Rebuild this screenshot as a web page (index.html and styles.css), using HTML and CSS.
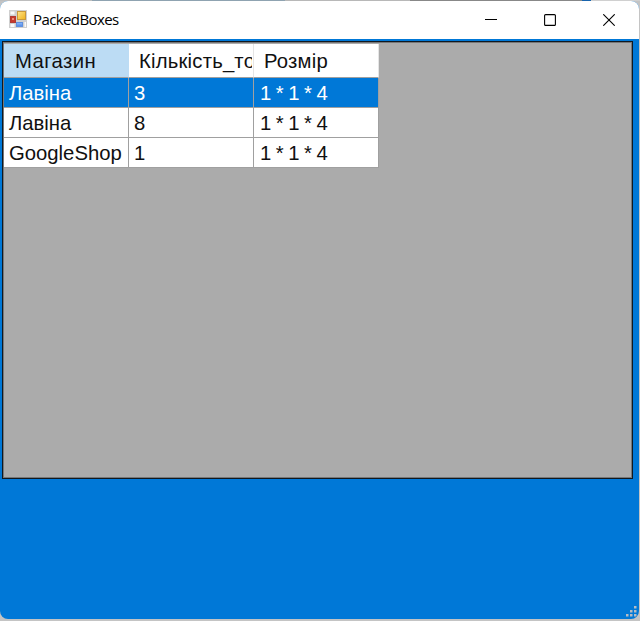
FILE: index.html
```html
<!DOCTYPE html>
<html lang="uk">
<head>
<meta charset="utf-8">
<title>PackedBoxes</title>
<link rel="stylesheet" href="styles.css">
</head>
<body>
<div class="window">
  <header class="titlebar">
    <svg class="app-icon" width="18" height="18" viewBox="0 0 18 18">
      <defs>
        <linearGradient id="gold" x2="1" y2="1"><stop stop-color="#ffe48a"/><stop offset="1" stop-color="#efb31c"/></linearGradient>
        <linearGradient id="blue" x2="0" y2="1"><stop stop-color="#8bbcff"/><stop offset="1" stop-color="#4f86e4"/></linearGradient>
      </defs>
      <rect width="18" height="18" fill="#cfcfcf"/>
      <path d="M1.500 1.500h4v3h-4zM1.500 14h4v3h-4zM15.500 12h1.500v5h-1.500z" fill="#fafafa"/>
      <rect x="1.500" y="6.500" width="5" height="6" fill="#c83a2a" stroke="#b03a34"/>
      <rect x="3" y="8" width="2" height="2" fill="#ef8877"/>
      <rect x="8.500" y="1.500" width="8" height="8" fill="url(#gold)" stroke="#c9983a"/>
      <rect x="7.500" y="12.500" width="6" height="4" fill="url(#blue)" stroke="#5f90de"/>
    </svg>
    <span class="title">PackedBoxes</span>
    <div class="controls">
      <svg width="12" height="12" viewBox="0 0 12 12"><path d="M0 5.500h12"/></svg>
      <svg width="12" height="12" viewBox="0 0 12 12"><rect x=".6" y=".6" width="10.800" height="10.800" rx="1"/></svg>
      <svg width="12" height="12" viewBox="0 0 12 12"><path d="M.3.3l11.400 11.400M11.700.3L.3 11.700"/></svg>
    </div>
  </header>
  <main class="client">
    <div class="grid-view">
      <div class="row head">
        <div class="cell current">Магазин</div><div class="cell"><span class="clip">Кількість_то</span></div><div class="cell">Розмір</div>
      </div>
      <div class="row selected">
        <div class="cell">Лавіна</div><div class="cell">3</div><div class="cell size">1 * 1 * 4</div>
      </div>
      <div class="row">
        <div class="cell">Лавіна</div><div class="cell">8</div><div class="cell size">1 * 1 * 4</div>
      </div>
      <div class="row">
        <div class="cell">GoogleShop</div><div class="cell">1</div><div class="cell size">1 * 1 * 4</div>
      </div>
    </div>
    <svg class="grip" width="11" height="11" viewBox="0 0 11 11"><path d="M8 0h2.500v2.500H8zM4 4h2.500v2.500H4zM8 4h2.500v2.500H8zM0 8h2.500v2.500H0zM4 8h2.500v2.500H4zM8 8h2.500v2.500H8z"/></svg>
  </main>
</div>
</body>
</html>
```
FILE: styles.css
```css
* { box-sizing: border-box; }
body {
  margin: 0;
  height: 621px;
  padding: 1px 1px 2px 0;
  overflow: hidden;
  background: linear-gradient(90deg, #bdbdbd 0 92px, #8fa3b1 92px 285px, #b8b8b8 285px 410px, #888 410px 582px, #1864ad 582px 591px, #d0d0d0 591px) top / 100% 1px no-repeat, #c4c4c4;
}
.window {
  height: 618px;
  display: flex;
  flex-direction: column;
  border-radius: 8px;
  overflow: hidden;
  background: #0078d7;
}
.titlebar {
  height: 38px;
  flex: none;
  display: flex;
  align-items: center;
  padding-left: 9px;
  background: #fff;
}
.app-icon {
  flex: none;
  margin-top: -2px;
}
.title {
  margin: -2px 0 0 6px;
  font: 15px/20px "Open Sans", "Noto Sans", sans-serif;
  letter-spacing: -0.6px;
  color: #000;
}
.controls {
  display: flex;
  gap: 47px;
  margin: 0 24px 0 auto;
}
.controls svg {
  fill: none;
  stroke: #000;
  stroke-width: 1.1;
}
.client {
  flex: 1;
  position: relative;
  padding: 2px 6px 0 2px;
}
.grid-view {
  height: 438px;
  border: 1px solid #101820;
  box-shadow: inset 0 0 0 1px #777;
  padding: 2px 1px;
  background: #ababab;
  font: 20.300px/24px "Liberation Sans", Arial, sans-serif;
  color: #101010;
}
.row {
  display: grid;
  grid-template-columns: 125px 125px 125px;
  width: 375px;
  height: 30px;
}
.cell {
  padding: 3px 0 0 5px;
  border-right: 1px solid #a0a0a0;
  border-bottom: 1px solid #a0a0a0;
  background: #fff;
  white-space: nowrap;
  overflow: hidden;
}
.head {
  height: 34px;
  letter-spacing: 0.2px;
}
.head .cell {
  padding: 5px 1px 0 10px;
  border-right-color: #e5e5e5;
}
.head .current {
  padding-left: 11px;
  background: #bcdcf4;
  border-right-color: #bcdcf4;
  letter-spacing: 0.4px;
}
.clip {
  display: block;
  overflow: hidden;
}
.selected .cell {
  background: #0078d7;
  color: #fff;
}
.row .size {
  padding-left: 6px;
  word-spacing: -1.1px;
}
.grip {
  position: absolute;
  right: 2px;
  bottom: 2px;
  fill: #b5bcc4;
}
```
